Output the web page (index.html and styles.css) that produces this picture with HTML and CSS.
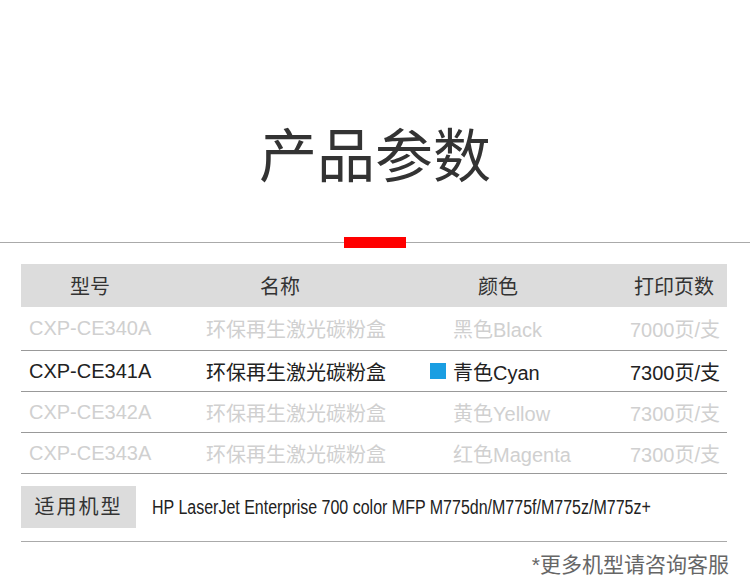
FILE: index.html
```html
<!DOCTYPE html>
<html lang="zh-CN">
<head>
  <meta charset="utf-8">
  <title>产品参数</title>
  <link rel="stylesheet" href="styles.css">
</head>
<body>
  <div class="page">
    <h1 class="title">产品参数</h1>

    <div class="divider">
      <span class="divider-line"></span>
      <span class="divider-mark"></span>
      <span class="divider-line"></span>
    </div>

    <div class="params">
      <div class="params-head">
        <span>型号</span>
        <span>名称</span>
        <span>颜色</span>
        <span class="head-last">打印页数</span>
      </div>

      <div class="params-row first">
        <span>CXP-CE340A</span>
        <span>环保再生激光碳粉盒</span>
        <span class="color-cell"><i class="swatch"></i>黑色Black</span>
        <span class="pages">7000页/支</span>
      </div>
      <div class="params-row active">
        <span>CXP-CE341A</span>
        <span>环保再生激光碳粉盒</span>
        <span class="color-cell"><i class="swatch cyan"></i>青色Cyan</span>
        <span class="pages">7300页/支</span>
      </div>
      <div class="params-row">
        <span>CXP-CE342A</span>
        <span>环保再生激光碳粉盒</span>
        <span class="color-cell"><i class="swatch"></i>黄色Yellow</span>
        <span class="pages">7300页/支</span>
      </div>
      <div class="params-row">
        <span>CXP-CE343A</span>
        <span>环保再生激光碳粉盒</span>
        <span class="color-cell"><i class="swatch"></i>红色Magenta</span>
        <span class="pages">7300页/支</span>
      </div>

      <div class="fit">
        <span class="fit-label">适用机型</span>
        <span class="fit-models">HP LaserJet Enterprise 700 color MFP M775dn/M775f/M775z/M775z+</span>
      </div>

      <p class="note">*更多机型请咨询客服</p>
    </div>
  </div>
</body>
</html>
```

FILE: styles.css
```css
body {
  margin: 0;
  background-color: #fff;
  font-family: "Liberation Sans", "Noto Sans CJK SC", sans-serif;
  color: #222;
}

.page {
  width: 750px;
}

.title {
  margin: 127px 0 0;
  font-size: 58px;
  line-height: 60px;
  font-weight: normal;
  text-align: center;
  color: #333;
}

.divider {
  display: flex;
  align-items: center;
  margin-top: 50px;
  height: 11px;
}

.divider-line {
  flex: 1;
  height: 1px;
  background-color: #aaa;
}

.divider-mark {
  width: 62px;
  height: 11px;
  background-color: #f00;
}

.params {
  margin: 16px 23px 0 21px;
}

.params-head {
  display: grid;
  grid-template-columns: 138px 242px 194px 1fr;
  height: 43px;
  align-items: center;
  text-align: center;
  background-color: #dcdcdc;
  font-size: 20px;
  color: #333;
}

.head-last {
  text-align: right;
  padding-right: 13px;
}

.params-row {
  display: grid;
  grid-template-columns: 177px 224px 1fr auto;
  align-items: center;
  height: 40px;
  padding: 0 7px 0 8px;
  border-bottom: 1px solid #999;
  font-size: 20px;
  color: #d0d0d0;
}

.params-row.first {
  height: 43px;
}

.params-row.active {
  color: #222;
}

.color-cell {
  display: flex;
  align-items: center;
}

.swatch {
  width: 16px;
  height: 16px;
  margin-right: 7px;
}

.swatch.cyan {
  background-color: #1a9ee2;
}

.pages {
  text-align: right;
}

.fit {
  display: flex;
  align-items: center;
  margin-top: 12px;
  padding-bottom: 13px;
  border-bottom: 1px solid #aaa;
}

.fit-label {
  flex-shrink: 0;
  width: 115px;
  height: 42px;
  line-height: 42px;
  text-align: center;
  background-color: #dcdcdc;
  font-size: 20px;
  letter-spacing: 2px;
  color: #333;
}

/* the model list is set in a narrow face: squeeze the regular one */
.fit-models {
  margin-left: 16px;
  font-size: 20px;
  white-space: nowrap;
  transform: scaleX(0.8);
  transform-origin: left center;
  color: #222;
}

.note {
  margin: 8px -2px 0 0;
  font-size: 21px;
  line-height: 30px;
  text-align: right;
  color: #666;
}
```
